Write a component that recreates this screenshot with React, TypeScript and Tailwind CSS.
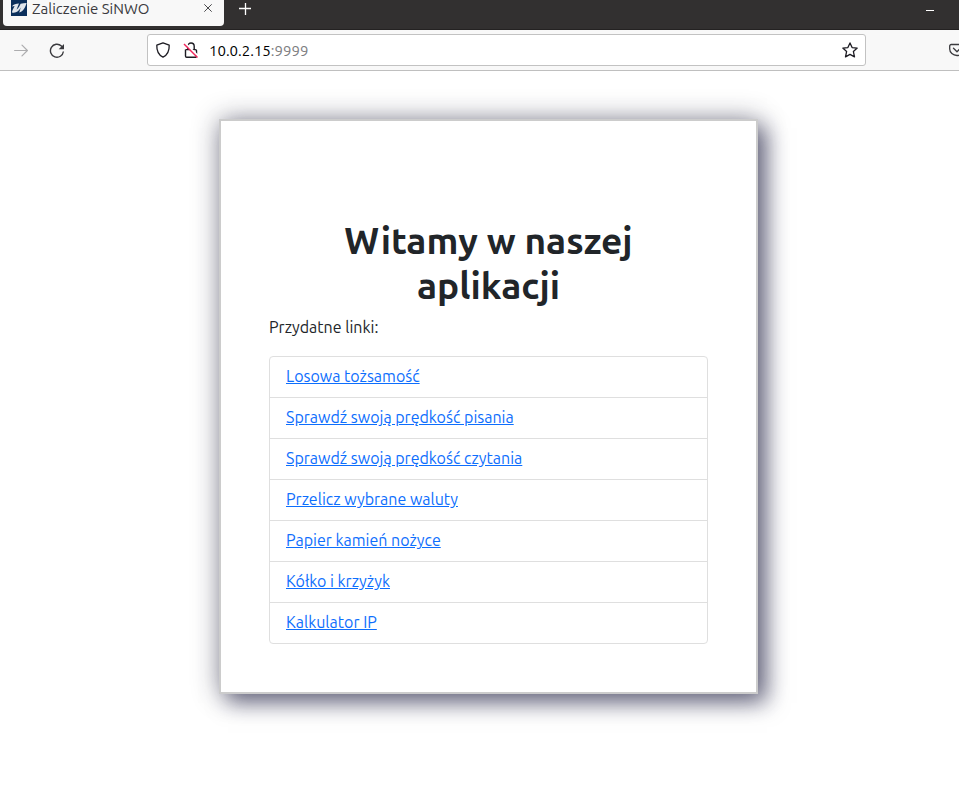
import React from "react";

const links = [
  "Losowa tożsamość",
  "Sprawdź swoją prędkość pisania",
  "Sprawdź swoją prędkość czytania",
  "Przelicz wybrane waluty",
  "Papier kamień nożyce",
  "Kółko i krzyżyk",
  "Kalkulator IP",
];

function TabBar() {
  return (
    <div className="flex h-[30px] items-start border-b border-[#242222] bg-[#323030] pl-[3px]">
      <div className="flex h-[26px] w-[221px] items-start rounded-b-[4px] bg-[#f8f8f8] pl-2 pr-[10px]">
        <svg className="h-4 w-4 shrink-0" viewBox="0 0 16 16" aria-hidden="true">
          <rect width="16" height="16" fill="#0a2f5c" />
          <path d="M.8 6.500C2.500 4.300 5 3.800 8 3.600L5.600 9.600C7.400 8.600 8.200 6.500 9.600 3.800 11.500 3.300 13.500 3.400 15.600 3 14.200 7.800 12.400 11.300 8.200 12.600L9.800 7.600C8 11 5.200 13.500 1 12.600.8 10.800 2.600 8.500 3.600 6Z" fill="#dfe5ec" />
        </svg>
        <span className="ml-[5px] flex-1 whitespace-nowrap text-[15px] leading-[18px] text-[#3a3a3e]">Zaliczenie SiNWO</span>
        <button aria-label="Zamknij kartę" className="flex h-4 w-3 items-center justify-center text-[#4a4a4d]">
          <svg className="h-2 w-2" viewBox="0 0 8 8" fill="none" stroke="currentColor" strokeWidth="1">
            <path d="M.3.300 7.700 7.700M7.700.300.300 7.700" />
          </svg>
        </button>
      </div>
      <button aria-label="Nowa karta" className="ml-[15px] flex h-[18px] w-3 items-center justify-center text-white">
        <svg className="h-3 w-3 shrink-0" viewBox="0 0 12 12" fill="none" stroke="currentColor" strokeWidth="1.300">
          <path d="M6.500 0v12M0 5.500h12" />
        </svg>
      </button>
      <button aria-label="Minimalizuj" className="ml-auto mr-[25px] flex h-[21px] w-2 items-center">
        <span className="h-px w-2 bg-white" />
      </button>
    </div>
  );
}

function Toolbar() {
  return (
    <div className="flex h-[41px] items-center overflow-hidden border-b border-[#bfbfbf] bg-[#f8f8f8] pl-[14px] text-[#3a3a3e]">
      <button aria-label="Dalej" className="text-[#adadaf]">
        <svg className="h-4 w-[14px]" viewBox="0 0 14 16" fill="none" stroke="currentColor" strokeWidth="1.200" strokeLinecap="round" strokeLinejoin="round">
          <path d="M.6 8.500h12.800M8 3.100 13.400 8.500 8 13.900" />
        </svg>
      </button>
      <button aria-label="Odśwież" className="ml-[21px]">
        <svg className="h-4 w-4" viewBox="0 0 16 16" fill="none" stroke="currentColor" strokeWidth="1.400">
          <path d="M14.400 9.500A6.500 6.500 0 1 1 12.400 4L13.500 5" />
          <path d="M15 1.900v5.300H9.700Z" fill="currentColor" stroke="none" />
        </svg>
      </button>
      <div className="ml-[82px] mr-[83px] flex h-8 min-w-0 flex-1 items-center rounded-[3px] border border-[#c2c2c2] bg-white px-[7px] text-[#1c1b22]">
        <svg className="h-4 w-4 shrink-0" viewBox="0 0 16 16" fill="none" stroke="currentColor" strokeWidth="1.300" strokeLinejoin="round" aria-hidden="true">
          <path d="M8 .9 14.200 3.200C14.400 8.500 12.700 12.800 8 15.200 3.300 12.800 1.600 8.500 1.800 3.200Z" />
        </svg>
        <svg className="ml-3 h-4 w-4 shrink-0" viewBox="0 0 16 16" fill="none" aria-hidden="true">
          <path d="M4.800 7.300V4.200a3.200 3.200 0 0 1 6.400 0v3.100M2.700 7.600h9.600a1.200 1.200 0 0 1 1.200 1.200v5.300a1.200 1.200 0 0 1-1.200 1.200H3.700a1.200 1.200 0 0 1-1.200-1.200V7.600" stroke="currentColor" strokeWidth="1.400" />
          <path d="M2 1 15.500 14.500" stroke="#fff" strokeWidth="2" />
          <path d="M1 2 14.500 15.500" stroke="#f0245a" strokeWidth="1.400" />
        </svg>
        <div className="ml-[10px] flex-1 pt-0.5 text-[15px] leading-5 text-black">
          10.0.2.15<span className="text-[#7c7c80]">:9999</span>
        </div>
        <button aria-label="Dodaj zakładkę">
          <svg className="h-4 w-4" viewBox="0 0 16 16" fill="none" stroke="currentColor" strokeWidth="1.300" strokeLinejoin="round">
            <path d="m8 .9 2.100 4.700 5.100.500-3.800 3.500 1.100 5.300L8 12.400l-4.500 2.500 1.100-5.300L.8 6.100l5.100-.5Z" />
          </svg>
        </button>
      </div>
      <button aria-label="Zapisz w Pocket" className="-mr-[6px] shrink-0">
        <svg className="h-4 w-4" viewBox="0 0 16 16" fill="none" stroke="currentColor" strokeWidth="1.300" strokeLinecap="round" strokeLinejoin="round">
          <path d="M2.200 2.500h11.600a1.500 1.500 0 0 1 1.500 1.500v3a7.300 6.500 0 0 1-14.600 0V4a1.500 1.500 0 0 1 1.500-1.500ZM4.500 6.300 8 9.700l3.500-3.400" />
        </svg>
      </button>
    </div>
  );
}

export default function App() {
  return (
    <div className="min-h-screen bg-white font-['Ubuntu','Noto_Sans',sans-serif] text-[#212529]">
      <TabBar />
      <Toolbar />
      <main className="flex justify-center pb-24 pl-[18px] pt-12">
        <section className="w-full max-w-[539px] border-2 border-[#cccccc] bg-white px-12 pb-12 pt-[97px] shadow-[9px_9px_20px_#12123a80,0_0_25px_#1c1c3068]">
          <h1 className="mb-[7px] text-center text-[37px] font-semibold leading-[45px]">
            Witamy w naszej
            <br />
            aplikacji
          </h1>
          <p className="mb-[17px] text-base leading-6">Przydatne linki:</p>
          <ul className="divide-y divide-[#dfdfdf] rounded-[4px] border border-[#dfdfdf]">
            {links.map((label) => (
              <li key={label} className="px-4 pb-[9px] pt-[7px] text-base leading-6">
                <a href="#" className="text-[#0d6efd] underline">
                  {label}
                </a>
              </li>
            ))}
          </ul>
        </section>
      </main>
    </div>
  );
}
